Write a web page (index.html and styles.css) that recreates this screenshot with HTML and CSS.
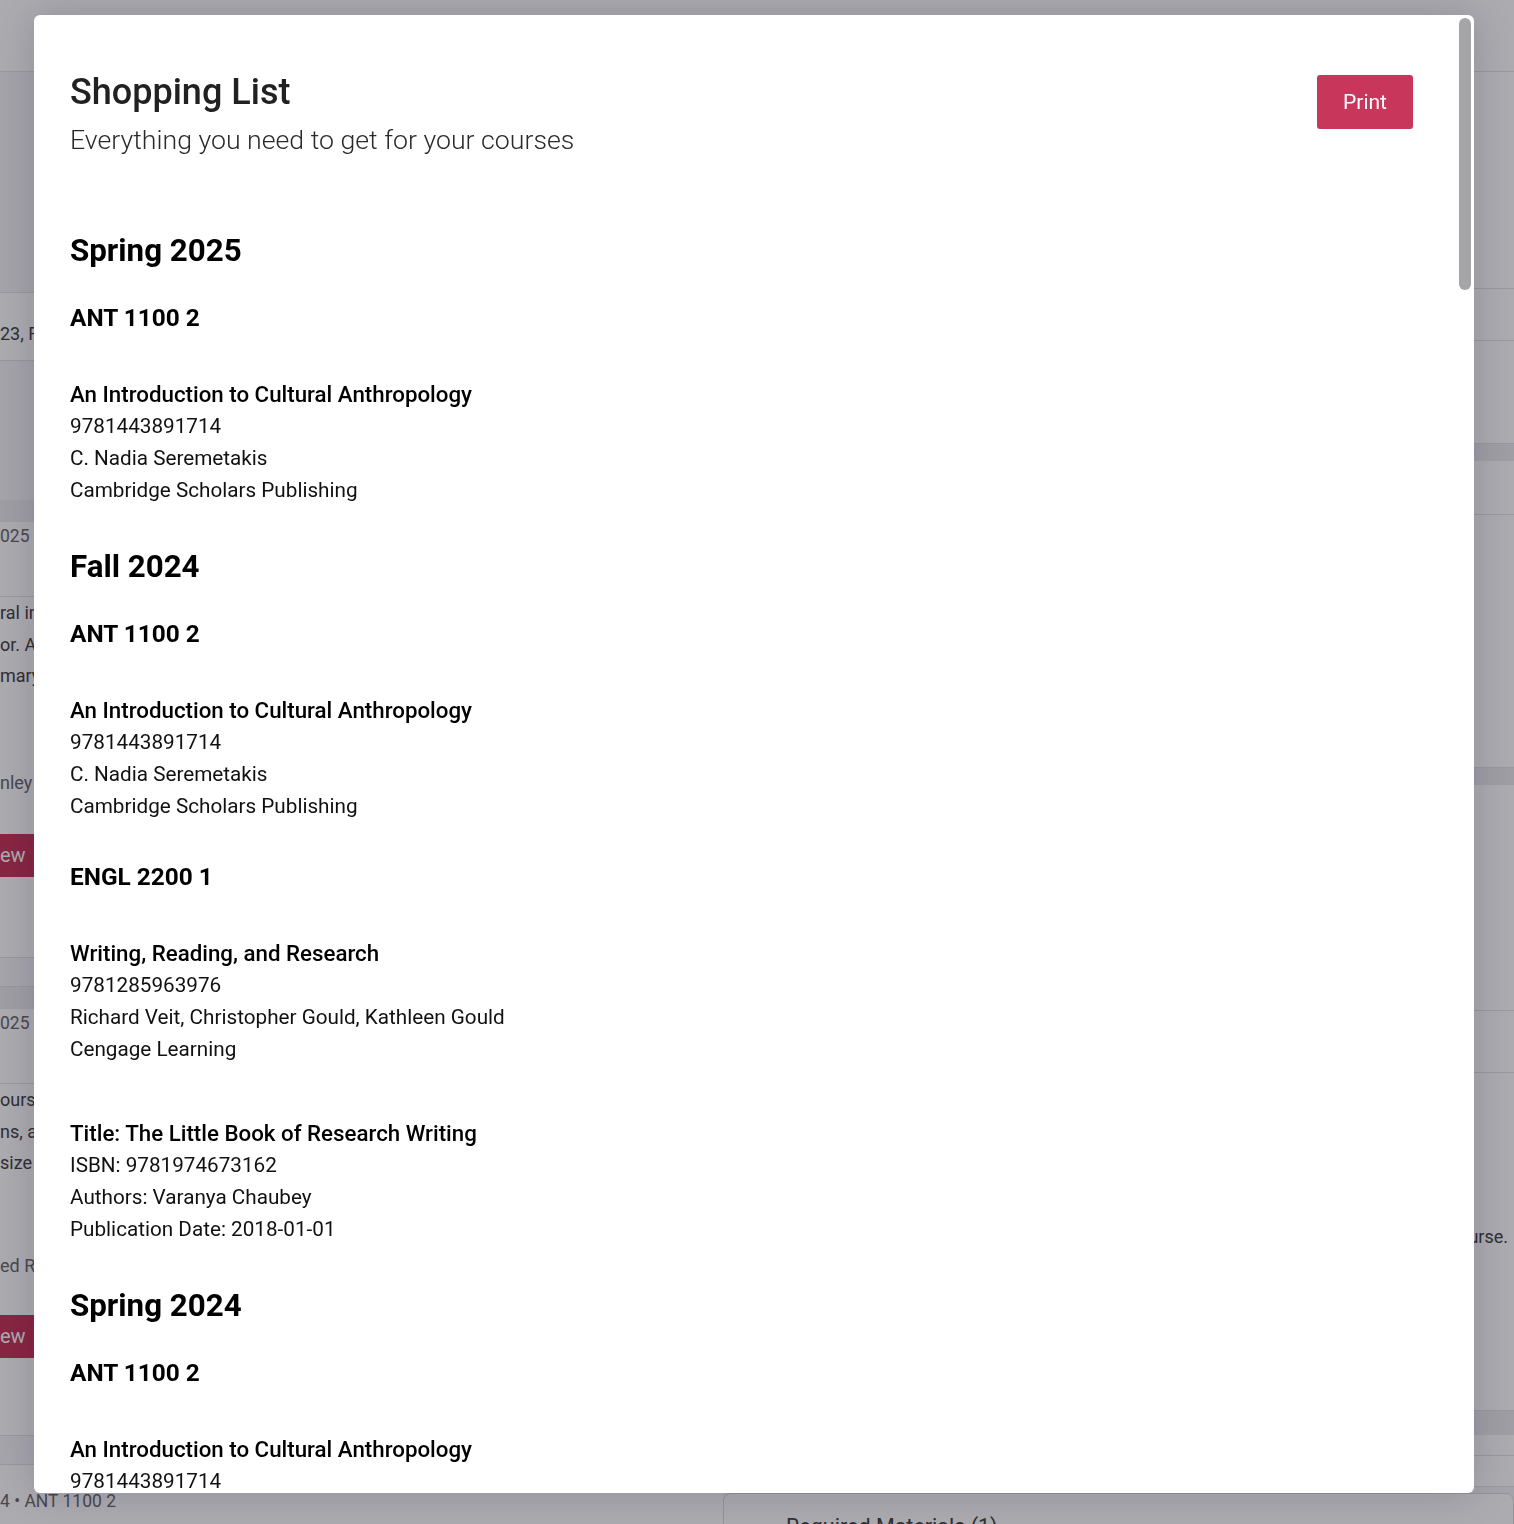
FILE: index.html
```html
<!DOCTYPE html>
<html lang="en">

<head>
  <meta charset="UTF-8">
  <meta name="viewport" content="width=device-width, initial-scale=1.0">
  <title>Shopping List</title>

  <link rel="stylesheet" href="styles.css">
</head>

<body>
  <div class="page">
    <header class="topbar"></header>
    <main class="columns">
      <section class="col_left">
        <div class="filters"></div>
        <div class="term_row">23, Fall 2024, Spring 2025</div>
        <div class="gap_tall"></div>
        <article class="card">
          <div class="card_band"></div>
          <div class="card_meta">025 • ANT 1100 2</div>
          <p class="card_text">ral introduction to the study of culture<br>or. Anne Seremetakis<br>mary of the course readings</p>
          <div class="card_by">nley</div>
          <div class="card_btn">ew</div>
        </article>
        <div class="card_gap"></div>
        <article class="card card_short">
          <div class="card_band"></div>
          <div class="card_meta">025 • ENGL 2200 1</div>
          <p class="card_text">ourse focuses on academic writing<br>ns, arguments and research<br>size and style</p>
          <div class="card_by">ed Readings</div>
          <div class="card_btn">ew</div>
        </article>
        <div class="card_gap"></div>
        <article class="card card_last">
          <div class="card_meta card_meta_last">4 • ANT 1100 2</div>
        </article>
      </section>
      <section class="col_right">
        <div class="r_row r_row_head"></div>
        <div class="r_row r_row_sm"></div>
        <div class="r_row r_row_md"></div>
        <div class="band band_sm"></div>
        <div class="r_row r_row_sm2"></div>
        <div class="r_row r_row_lg"></div>
        <div class="band band_sm"></div>
        <div class="r_row r_row_lg2"></div>
        <div class="r_row r_row_sm3"></div>
        <div class="r_row r_row_text">
          <p>Readings and materials required for the course.</p>
        </div>
        <div class="band band_sm2"></div>
        <div class="r_row r_row_xs"></div>
        <div class="r_row r_row_xs2"></div>
        <div class="materials">
          <div class="materials_head">Required Materials (1)</div>
        </div>
      </section>
    </main>
  </div>

  <div class="overlay">
    <div class="modal">
      <div class="modal_body">
        <div class="modal_head">
          <div>
            <h1 class="title">Shopping List</h1>
            <p class="subtitle">Everything you need to get for your courses</p>
          </div>
          <button class="print_btn">Print</button>
        </div>

        <div class="terms">
          <section class="term">
            <h2>Spring 2025</h2>
            <div class="course">
              <h3>ANT 1100 2</h3>
              <div class="book">
                <div class="book_title">An Introduction to Cultural Anthropology</div>
                <div>9781443891714</div>
                <div>C. Nadia Seremetakis</div>
                <div>Cambridge Scholars Publishing</div>
              </div>
            </div>
          </section>

          <section class="term">
            <h2>Fall 2024</h2>
            <div class="course">
              <h3>ANT 1100 2</h3>
              <div class="book">
                <div class="book_title">An Introduction to Cultural Anthropology</div>
                <div>9781443891714</div>
                <div>C. Nadia Seremetakis</div>
                <div>Cambridge Scholars Publishing</div>
              </div>
            </div>
            <div class="course">
              <h3>ENGL 2200 1</h3>
              <div class="book">
                <div class="book_title">Writing, Reading, and Research</div>
                <div>9781285963976</div>
                <div>Richard Veit, Christopher Gould, Kathleen Gould</div>
                <div>Cengage Learning</div>
              </div>
              <div class="book">
                <div class="book_title">Title: The Little Book of Research Writing</div>
                <div>ISBN: 9781974673162</div>
                <div>Authors: Varanya Chaubey</div>
                <div>Publication Date: 2018-01-01</div>
              </div>
            </div>
          </section>

          <section class="term">
            <h2>Spring 2024</h2>
            <div class="course">
              <h3>ANT 1100 2</h3>
              <div class="book">
                <div class="book_title">An Introduction to Cultural Anthropology</div>
                <div>9781443891714</div>
                <div>C. Nadia Seremetakis</div>
                <div>Cambridge Scholars Publishing</div>
              </div>
            </div>
          </section>
        </div>
      </div>
      <div class="scroll_thumb"></div>
    </div>
  </div>
</body>

</html>
```

FILE: styles.css
```css
* {
  box-sizing: border-box;
  margin: 0;
  padding: 0;
}

body {
  background-color: #f3f3f5;
  font-family: Roboto, "Liberation Sans", sans-serif;
  height: 100vh;
  overflow: hidden;
  width: 100vw;
}

/* page under the dialog */

.page {
  height: 100vh;
  overflow: hidden;
}

.topbar {
  background-color: #ffffff;
  border-bottom: 1px solid #e2e2e4;
  height: 72px;
}

.columns {
  display: grid;
  grid-template-columns: 723px 1fr;
}

.col_left,
.col_right {
  color: #444444;
  font-size: 18px;
}

.filters {
  background-color: #f4f4f6;
  height: 220px;
}

.term_row {
  background-color: #ffffff;
  border-bottom: 1px solid #e2e2e4;
  border-top: 1px solid #e2e2e4;
  height: 69px;
  line-height: 24px;
  padding-top: 29px;
}

.gap_tall {
  background-color: #f4f4f6;
  height: 139px;
}

.card {
  background-color: #ffffff;
  height: 457px;
}

.card_short {
  height: 448px;
}

.card_band {
  background-color: #ececee;
  height: 22px;
}

.card_gap {
  background-color: #f6f6f8;
  border-bottom: 1px solid #e2e2e4;
  border-top: 1px solid #e2e2e4;
  height: 30px;
}

.card_meta {
  border-bottom: 1px solid #e2e2e4;
  color: #6a6a6e;
  font-size: 17.5px;
  line-height: 20px;
  padding: 4px 0 50px;
}

.card_meta_last {
  border-bottom: none;
  padding: 26px 0 0;
}

.card_text {
  line-height: 31.5px;
}

.card_by {
  color: #6a6a6e;
  line-height: 24px;
  padding-top: 79px;
}

.card_short .card_by {
  padding-top: 75px;
}

.card_btn {
  background-color: #c8365b;
  color: #ffffff;
  display: inline-block;
  font-size: 20px;
  line-height: 43px;
  margin-top: 39px;
  padding-right: 40px;
}

.card_short .card_btn {
  margin-top: 37px;
}

.r_row {
  background-color: #ffffff;
  border-bottom: 1px solid #e2e2e4;
}

.r_row_head { height: 217px; }
.r_row_sm { height: 52px; }
.r_row_md { height: 103px; }
.r_row_sm2 { height: 54px; }
.r_row_lg { height: 253px; }
.r_row_lg2 { height: 226px; }
.r_row_sm3 { height: 62px; }
.r_row_xs { height: 21px; }
.r_row_xs2 { height: 31px; }

.band {
  background-color: #ececee;
}

.band_sm {
  height: 17px;
}

.band_sm2 {
  height: 24px;
}

.r_row_text {
  display: flex;
  height: 338px;
  justify-content: flex-end;
  padding: 148px 6px 0 0;
}

.r_row_text p {
  line-height: 32px;
  white-space: nowrap;
}

.materials {
  background-color: #ffffff;
  border: 1px solid #dcdcde;
  border-radius: 8px;
  margin-top: 6px;
  padding: 20px 0 0 62px;
}

.materials_head {
  color: #444444;
  font-size: 21.5px;
}

/* dialog */

.overlay {
  background-color: rgba(12, 10, 22, 0.34);
  display: flex;
  inset: 0;
  padding: 15px 40px 31px 34px;
  position: fixed;
}

.modal {
  background-color: #ffffff;
  border-radius: 6px;
  box-shadow: 0 0 40px rgba(20, 10, 40, 0.18);
  flex: 1;
  overflow: hidden;
  position: relative;
}

.modal_body {
  color: #111111;
  height: 100%;
  overflow: hidden;
  padding: 60px 61px 0 36px;
}

.modal_head {
  align-items: flex-start;
  display: flex;
  justify-content: space-between;
}

.title {
  color: #212121;
  font-size: 36px;
  font-weight: 500;
  line-height: 34px;
}

.subtitle {
  color: #2a2a2a;
  font-size: 26.7px;
  font-weight: 300;
  line-height: 31px;
  margin-top: 16px;
}

.print_btn {
  background-color: #c8365b;
  border: none;
  border-radius: 3px;
  color: #ffffff;
  font-family: Roboto, "Liberation Sans", sans-serif;
  font-size: 21px;
  line-height: 32px;
  padding: 11px 0;
  width: 96px;
}

.terms {
  margin-top: 76px;
}

.term + .term {
  margin-top: 42px;
}

.term h2 {
  color: #000000;
  font-size: 31.3px;
  font-weight: 700;
  line-height: 38px;
}

.course {
  margin-top: 34px;
}

.course + .course {
  margin-top: 41px;
}

.course h3 {
  color: #000000;
  font-size: 24.4px;
  font-weight: 700;
  line-height: 28px;
}

.book {
  font-size: 20.7px;
  line-height: 32px;
  margin-top: 46px;
}

.book + .book {
  margin-top: 52px;
}

.book_title {
  color: #000000;
  font-size: 22.3px;
  font-weight: 500;
}

.scroll_thumb {
  background-color: #a5a5a7;
  border-radius: 6px;
  height: 272px;
  position: absolute;
  right: 3px;
  top: 3px;
  width: 12px;
}
```
